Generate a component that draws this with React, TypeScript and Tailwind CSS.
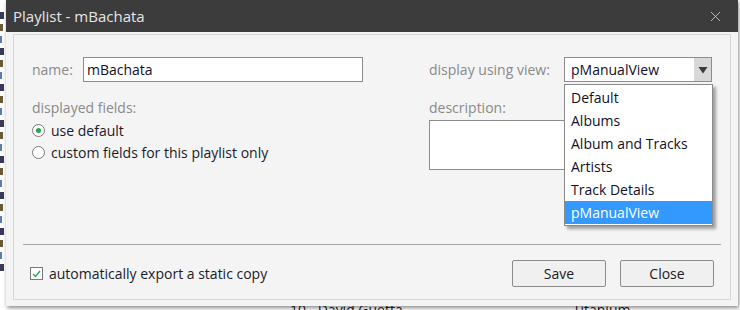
import { X } from "lucide-react";

const VIEWS = ["Default", "Albums", "Album and Tracks", "Artists", "Track Details", "pManualView"];
const SELECTED = "pManualView";

function Radio({ checked, label }: { checked?: boolean; label: string }) {
  return (
    <label className="flex items-center gap-[6px] h-[22px] text-[14px] text-[#1b1b2a]">
      <span className="w-[13px] h-[13px] rounded-full border border-[#7a7a7a] bg-white flex items-center justify-center">
        {checked && <span className="w-[5px] h-[5px] rounded-full bg-[#1fa84a]" />}
      </span>
      {label}
    </label>
  );
}

function Background() {
  // the main app window peeking out behind the dialog
  return (
    <div className="absolute inset-0 bg-white">
      <div className="absolute left-0 top-0 w-[6px] h-full flex flex-col gap-[5px] pt-[12px]">
        {Array.from({ length: 22 }).map((_, i) => (
          <span
            key={i}
            className={`h-[7px] ${i % 3 === 0 ? "bg-[#3a3a5a] w-[4px]" : i % 3 === 1 ? "bg-[#6b5a3a] w-[3px]" : "bg-[#5b7ab8] w-[2px]"}`}
          />
        ))}
      </div>
      <div className="absolute left-0 top-[299px] w-full flex text-[14px] text-[#222]">
        <span className="ml-[290px]">10.</span>
        <span className="ml-[8px]">David Guetta</span>
        <span className="ml-[170px]">Titanium</span>
      </div>
    </div>
  );
}

export default function App() {
  return (
    <div className="relative w-[740px] h-[310px] overflow-hidden" style={{ fontFamily: '"Open Sans", "Noto Sans", sans-serif' }}>
      <Background />
      <div className="absolute left-[6px] top-0 w-[732px] h-[306px] bg-[#f4f4f4] shadow-[1px_2px_4px_rgba(0,0,0,0.45)] flex flex-col">
        {/* Title bar */}
        <div className="h-[32px] bg-[#3c3c3c] flex items-center justify-between pl-[7px] pr-[14px]">
          <span className="text-[15px] text-[#e6e6e6]">Playlist - mBachata</span>
          <X className="w-[17px] h-[17px] text-[#d8d8d8]" strokeWidth={1.1} />
        </div>

        {/* Body */}
        <div className="flex-1 px-[7px] pt-[2px] pb-[6px]">
          <div className="relative h-full border border-[#d6d6d6] flex flex-col">
            <div className="flex-1 grid grid-cols-[397px_1fr] pl-[18px] pt-[22px] pr-[17px]">
              {/* left column */}
              <div className="flex flex-col">
                <div className="flex items-center h-[25px]">
                  <span className="w-[51px] text-[14px] text-[#8a8a8a]">name:</span>
                  <div className="w-[280px] h-[25px] border border-[#8c8c8c] bg-white flex items-center px-[3px] text-[14px] text-[#10102a]">
                    mBachata
                  </div>
                </div>
                <span className="mt-[15px] text-[14px] leading-[22px] text-[#8a8a8a]">displayed fields:</span>
                <div className="flex flex-col">
                  <Radio checked label="use default" />
                  <Radio label="custom fields for this playlist only" />
                </div>
              </div>

              {/* right column */}
              <div className="flex flex-col">
                <div className="flex items-center h-[25px]">
                  <span className="w-[135px] text-[14px] text-[#8a8a8a]">display using view:</span>
                  <div className="relative w-[148px] h-[25px] border border-[#8c8c8c] bg-white flex items-center text-[14px] text-[#10102a]">
                    <span className="flex-1 pl-[6px]">{SELECTED}</span>
                    <span className="w-[17px] h-full bg-[#d8d8d8] flex items-center justify-center">
                      <svg width="10" height="8" viewBox="0 0 10 8">
                        <path d="M0.5 1 L9.5 1 L5 7.5 Z" fill="#3a3a3a" />
                      </svg>
                    </span>
                    {/* open dropdown list */}
                    <div className="absolute left-[-1px] top-[26px] w-[149px] border border-[#8a8a8a] bg-white shadow-[3px_3px_3px_rgba(0,0,0,0.35)] z-10 flex flex-col py-[1px]">
                      {VIEWS.map((v) => (
                        <div
                          key={v}
                          className={`h-[23px] flex items-center px-[6px] text-[14px] ${v === SELECTED ? "bg-[#3399ff] text-white" : "text-[#10102a]"}`}
                        >
                          {v}
                        </div>
                      ))}
                    </div>
                  </div>
                </div>
                <span className="mt-[15px] text-[14px] leading-[22px] text-[#8a8a8a]">description:</span>
                <div className="mt-[1px] w-[283px] h-[50px] border border-[#8c8c8c] bg-white" />
              </div>
            </div>

            {/* footer */}
            <div className="mx-[9px] border-t border-[#a8a8a8]" />
            <div className="flex items-center justify-between pl-[16px] pr-[16px] pt-[15px] pb-[12px]">
              <label className="flex items-center gap-[6px] text-[14px] text-[#1b1b2a]">
                <span className="w-[13px] h-[13px] border border-[#7a7a7a] bg-white flex items-center justify-center">
                  <svg width="9" height="8" viewBox="0 0 9 8">
                    <path d="M1 4 L3.5 6.5 L8 1" fill="none" stroke="#1fa84a" strokeWidth="1.3" />
                  </svg>
                </span>
                automatically export a static copy
              </label>
              <div className="flex gap-[14px]">
                <button className="w-[94px] h-[27px] rounded-[2px] border border-[#8c8c8c] bg-[#f0f0f0] text-[14px] text-[#1b1b2a]">Save</button>
                <button className="w-[94px] h-[27px] rounded-[2px] border border-[#8c8c8c] bg-[#f0f0f0] text-[14px] text-[#1b1b2a]">Close</button>
              </div>
            </div>
          </div>
        </div>
      </div>
    </div>
  );
}
